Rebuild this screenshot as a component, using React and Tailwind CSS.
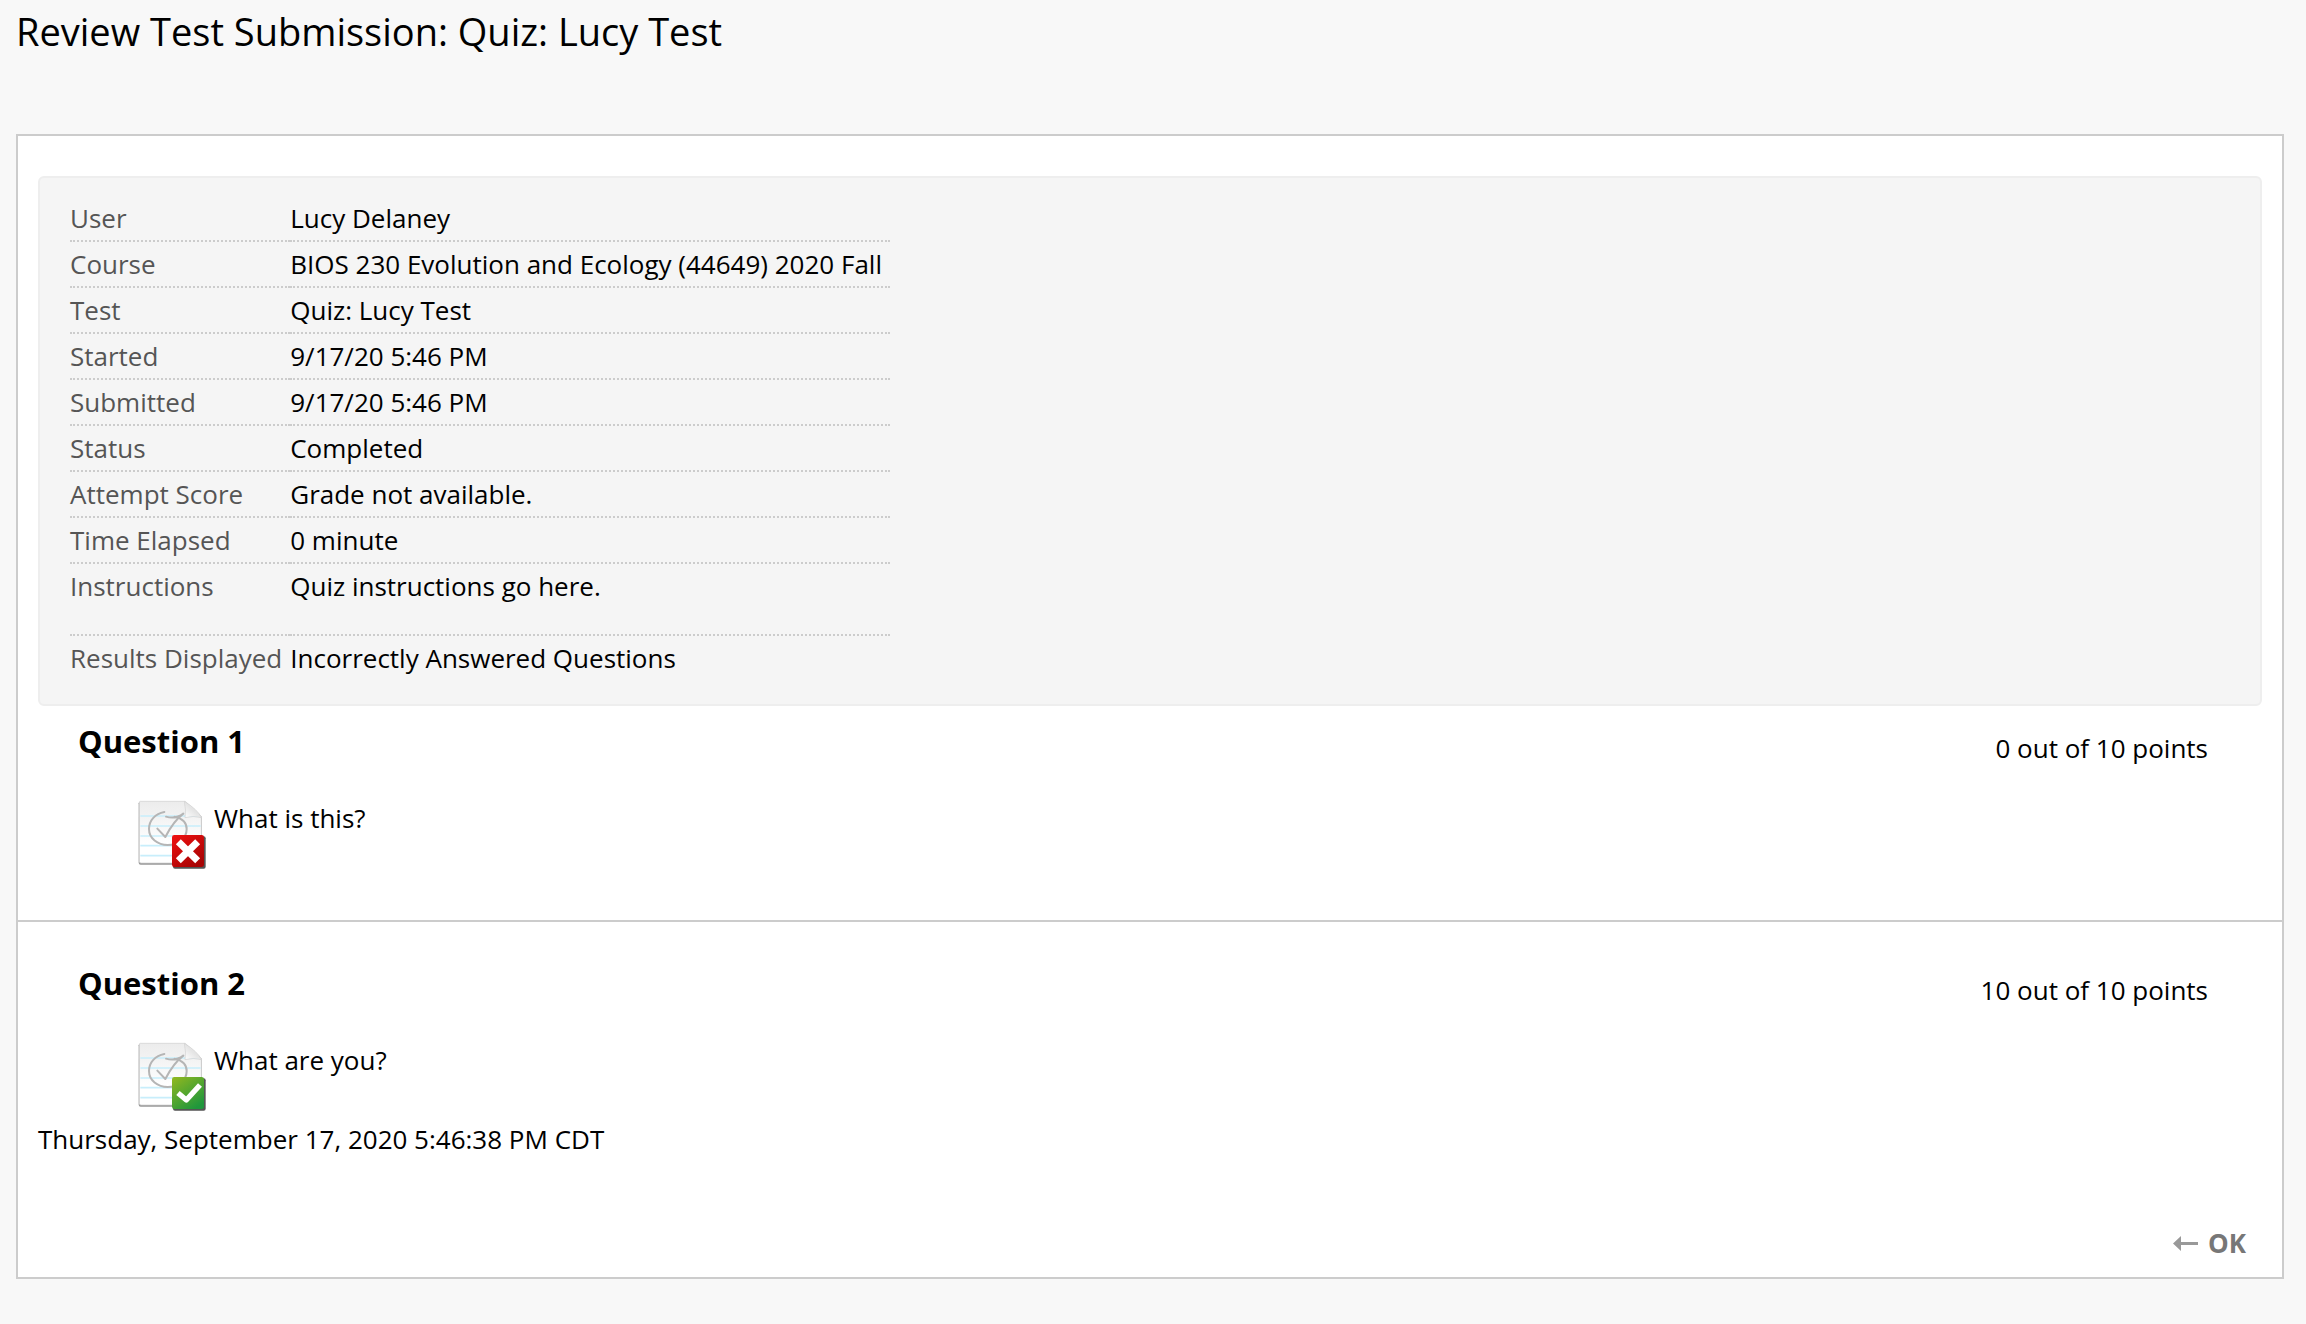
const details = [
  ["User", "Lucy Delaney"],
  ["Course", "BIOS 230 Evolution and Ecology (44649) 2020 Fall"],
  ["Test", "Quiz: Lucy Test"],
  ["Started", "9/17/20 5:46 PM"],
  ["Submitted", "9/17/20 5:46 PM"],
  ["Status", "Completed"],
  ["Attempt Score", "Grade not available."],
  ["Time Elapsed", "0 minute"],
  ["Instructions", "Quiz instructions go here."],
  ["Results Displayed", "Incorrectly Answered Questions"],
];

const questions = [
  { title: "Question 1", points: "0 out of 10 points", text: "What is this?", correct: false },
  { title: "Question 2", points: "10 out of 10 points", text: "What are you?", correct: true },
];

function ResultIcon({ correct }) {
  const id = correct ? "correct" : "incorrect";
  return (
    <svg
      role="img"
      aria-label={correct ? "Correct" : "Incorrect"}
      viewBox="48 48 216 216"
      className="size-[72px] shrink-0"
    >
      <defs>
        <linearGradient id={`${id}-paper`} x1="0" y1="0" x2="0" y2="1">
          <stop offset="0" stopColor="#ececec" />
          <stop offset="0.7" stopColor="#ffffff" />
        </linearGradient>
        <linearGradient id={`${id}-badge`} x1="0" y1="0" x2="0.7" y2="1">
          <stop offset="0" stopColor={correct ? "#93b81f" : "#f01010"} />
          <stop offset="1" stopColor={correct ? "#1f973c" : "#a80404"} />
        </linearGradient>
        <linearGradient id={`${id}-fold`} x1="0" y1="1" x2="1" y2="0">
          <stop offset="0" stopColor="#ffffff" />
          <stop offset="0.5" stopColor="#e4e4e4" />
          <stop offset="1" stopColor="#fafafa" />
        </linearGradient>
        <filter id={`${id}-soft`} x="-20%" y="-20%" width="140%" height="140%">
          <feGaussianBlur stdDeviation="2" />
        </filter>
      </defs>
      <path d="M58 54H196L245 98V236Q245 242 238 242H62Q56 242 56 236V58Z" fill="#999" filter={`url(#${id}-soft)`} />
      <path d="M61 52H196L244 97V233Q244 237 240 237H63Q58 237 58 232V55Q58 52 61 52Z" fill={`url(#${id}-paper)`} stroke="#cfcfcf" strokeWidth="2" />
      <path d="M61 96H240M61 126H242M61 156H242M61 185H242M61 215H242" stroke="#c8eefb" strokeWidth="5" />
      <path d="M193 52Q199 80 195 101Q220 94 245 101Q232 76 193 52Z" fill={`url(#${id}-fold)`} stroke="#d0d0d0" strokeWidth="2" />
      <g fill="none" stroke="#b5b5b5" strokeWidth="6" strokeLinecap="round" strokeLinejoin="round">
        <path d="M133 84C106 89 87 109 87 135C87 163 113 183 143 183C174 183 200 163 200 135C200 115 187 103 164 98" />
        <path d="M138 98C158 104 178 98 190 89C169 105 151 130 136 159L112 134" />
      </g>
      <rect x="159" y="157" width="98" height="97" rx="6" fill="#555" filter={`url(#${id}-soft)`} />
      <rect x="156" y="153" width="96" height="96" rx="7" fill={`url(#${id}-badge)`} />
      {correct ? (
        <path d="M174 201L199 222L240 177" fill="none" stroke="#fff" strokeWidth="16" strokeLinejoin="round" />
      ) : (
        <path d="M175 173L233 230M233 173L175 230" fill="none" stroke="#fff" strokeWidth="21" />
      )}
    </svg>
  );
}

function Question({ question, className }) {
  return (
    <section className={className}>
      <div className="flex items-end justify-between pr-[74px] pl-[60px]">
        <h2 className="text-[31px] leading-[50px] font-bold">{question.title}</h2>
        <p>{question.points}</p>
      </div>
      <div className="mt-[34px] flex gap-[6px] pl-[118px]">
        <ResultIcon correct={question.correct} />
        <p>{question.text}</p>
      </div>
    </section>
  );
}

export default function App() {
  return (
    <div className="min-h-screen bg-[#f8f8f8] pr-[22px] pb-10 pl-4 font-['Open_Sans',sans-serif] text-[26px] leading-9 text-black">
      <h1 className="pt-1 pb-[76px] text-[38px] leading-[54px]">Review Test Submission: Quiz: Lucy Test</h1>
      <main className="border-2 border-[#ccc] bg-white pt-10 pb-4">
        <div className="mx-5 rounded-md border-2 border-[#eee] bg-[#f5f5f5] px-[30px] pt-[18px] pb-6">
          <table className="border-separate border-spacing-0 text-left">
            <tbody>
              {details.map(([label, value], index) => {
                const last = index === details.length - 1;
                const line = last ? "" : " border-b-2 border-dotted border-[#ccc]";
                const bottom = label === "Instructions" ? " pb-[30px]" : " pb-1";
                return (
                  <tr key={label}>
                    <th scope="row" className={"pt-1 pr-2 align-top font-normal whitespace-nowrap text-[#555]" + bottom + line}>
                      {label}
                    </th>
                    <td className={"pt-1 pr-2 align-top" + bottom + line}>{value}</td>
                  </tr>
                );
              })}
            </tbody>
          </table>
        </div>
        <Question question={questions[0]} className="border-b-2 border-[#ccc] pt-[10px] pb-12" />
        <Question question={questions[1]} className="pt-9" />
        <p className="mt-[7px] px-5">Thursday, September 17, 2020 5:46:38 PM CDT</p>
        <div className="mt-[68px] flex justify-end pr-9">
          <button type="button" className="flex items-center gap-[10px] font-bold text-[#777]">
            <svg viewBox="0 0 25 15" aria-hidden="true" className="h-[15px] w-[25px]">
              <path d="M8 0V6H25V9H8V15L0 7.500Z" fill="#999" />
            </svg>
            OK
          </button>
        </div>
      </main>
    </div>
  );
}
